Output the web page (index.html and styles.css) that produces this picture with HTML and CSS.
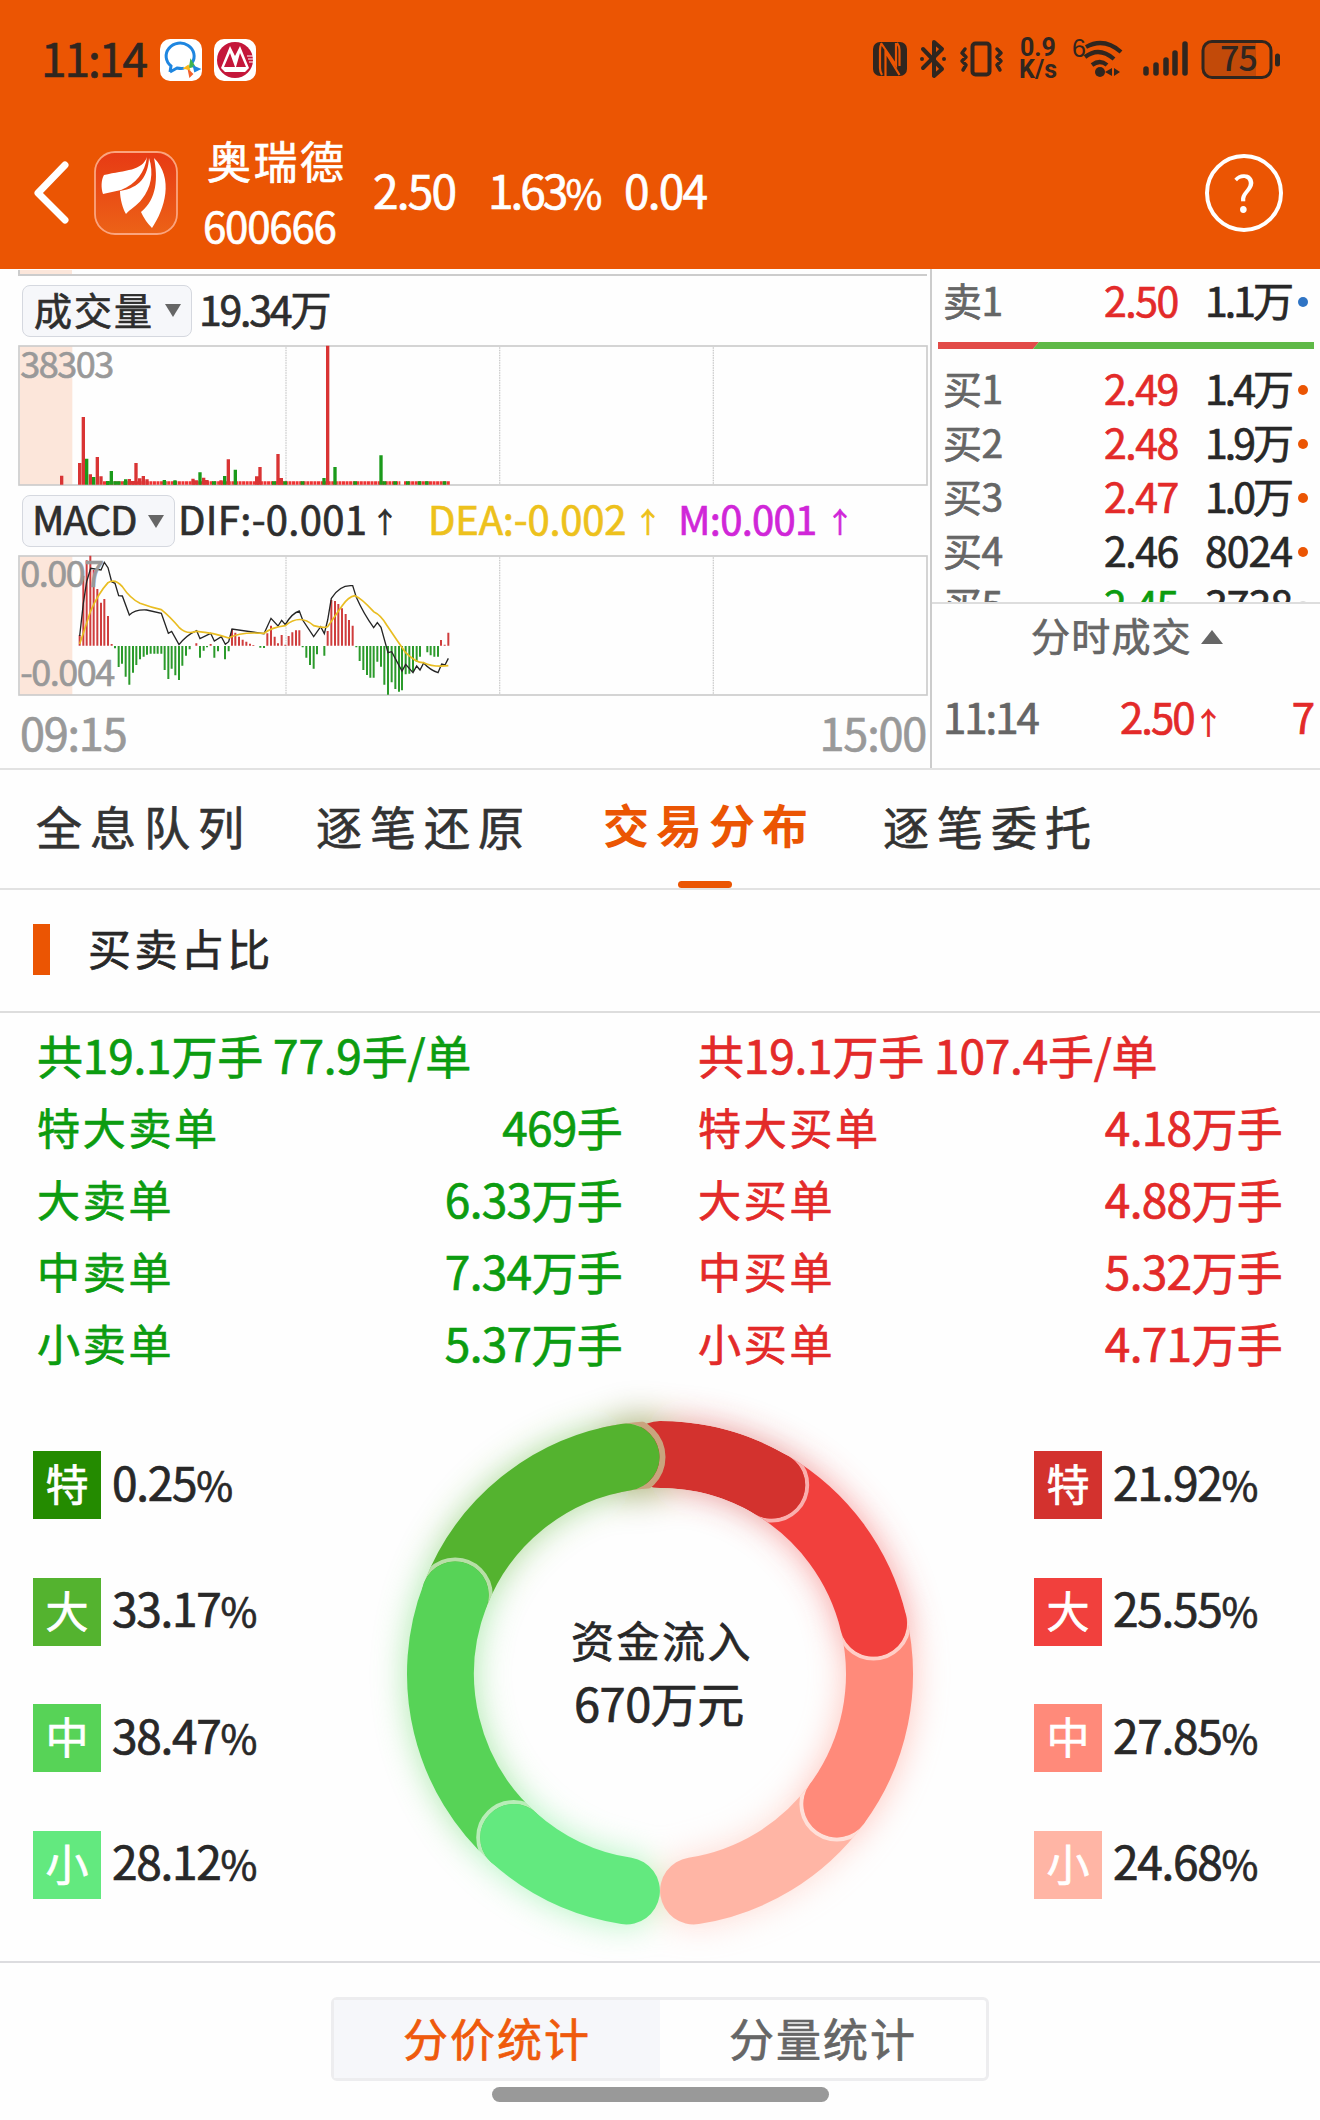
FILE: index.html
```html
<!DOCTYPE html>
<html lang="zh-CN">
<head>
<meta charset="utf-8">
<title>奥瑞德 600666</title>
<link rel="stylesheet" href="styles.css">
</head>
<body>
<header class="header">
  <div class="status">
    <span class="clock">11:14</span>
    <svg class="app-icon" viewBox="0 0 42 42"><rect width="42" height="42" rx="10" fill="#fff"/><path d="M10 33l1-6A14 13 0 1 1 32 24M10 33l7-4q5 1 7 0" fill="none" stroke="#1e86e0" stroke-width="3"/><path d="M31 22l3 5-4 1z" fill="#3fb34f" stroke="#3fb34f" stroke-width="2"/><path d="M34 28l5 2-4 2z" stroke="#1e86e0" stroke-width="2" fill="#1e86e0"/><path d="M29 32l3 3-2 2z" stroke="#f2602c" stroke-width="2" fill="#f2602c"/><path d="M25 29l3-2 1 3z" stroke="#fbb81b" stroke-width="2" fill="#fbb81b"/></svg>
    <svg class="app-icon" viewBox="0 0 42 42"><rect width="42" height="42" rx="10" fill="#fff"/><circle cx="21" cy="21" r="18" fill="#c4163a"/><path d="M7 29L16 7l5 10 5-10 9 22-4 4H11z" fill="#fff"/><path d="M10 28l6-14 5 14zM22 28l4-14 6 14z" fill="#c4163a"/><path d="M33 17h6M34 20h5M35 23h4" stroke="#fff" stroke-width="1"/></svg>
    <svg class="status-icons" viewBox="860 30 430 60" width="430" height="60" fill="none" stroke="#30261f" stroke-linecap="round">
      <rect x="873" y="42" width="34" height="34" rx="7" fill="#30261f" stroke="none"/>
      <path d="M881.500 44Q880 46 880 50V68Q880 72 882 75M897 43Q899.500 46 899.500 50V66" stroke="#eb5503" stroke-width="2.200" stroke-linecap="butt"/>
      <path d="M885.500 76V52l14 23M881 43l15 22V43" stroke="#eb5503" stroke-width="2.200" stroke-linecap="butt"/>
      <path d="M923 49l19 20-8 7V42l8 7-19 19M922 59v0M944 59v0" stroke-width="4" stroke-linejoin="round"/>
      <rect x="972.500" y="43.500" width="17" height="31" rx="3" stroke-width="4"/>
      <path d="M965 49l-3 4 4 4-4 4 4 4-3 5M997 49l4 4-4 4 4 4-4 4 3 5" stroke-width="3.500" stroke-linejoin="round"/>
      <text class="speed" x="1020" y="56">0.9</text><text class="speed" x="1019" y="78">K/s</text>
      <text class="wifi-gen" x="1072" y="57">6</text>
      <path d="M1086 47q18-10 35 5M1085 57q14-11 29 2M1092 65q8-6 15 0" stroke-width="4.200" stroke-linecap="butt"/>
      <circle cx="1100" cy="72" r="5" fill="#30261f" stroke="none"/>
      <path d="M1112 68v8l-7-4zM1114 68v8l6-4z" fill="#30261f" stroke="none"/>
      <path d="M1146 69v4M1156 65v8M1166 60v13M1175 53v20M1185 44v29" stroke-width="5.500"/>
      <path d="M1212 43h44v33h-44a8 8 0 0 1-8-8V51a8 8 0 0 1 8-8z" fill="#30261f" fill-opacity=".22" stroke="none"/>
      <rect x="1203" y="41.500" width="68" height="36" rx="9" stroke-width="3"/>
      <path d="M1277.500 56v8" stroke-width="5"/>
      <text class="battery" x="1220" y="71">75</text>
    </svg>
  </div>
  <div class="titlebar">
    <svg class="back" viewBox="0 0 38 64"><path d="M33 4L6 32l27 27" fill="none" stroke="#fff" stroke-width="7" stroke-linecap="round" stroke-linejoin="round"/></svg>
    <svg class="logo" viewBox="0 0 84 84"><defs><linearGradient id="lg" x1="0" y1="0" x2="0" y2="1"><stop offset="0" stop-color="#e73a14"/><stop offset="1" stop-color="#ec6217"/></linearGradient></defs><rect x="1" y="1" width="82" height="82" rx="20" fill="url(#lg)" stroke="#fba47e" stroke-width="1.800"/><path d="M53 6C48 20 32 19 10 24C7 29 7 37 9 43L27 39C42 33 51 21 53 6z" fill="#fff"/><path d="M55 7C54 25 46 37 26 40C26 48 29 58 32 63C36 58 43 55 48 48C57 37 60 22 55 7z" fill="#fff"/><path d="M60 7C64 27 63 48 47 61Q51 70 58 77C71 58 80 27 60 7z" fill="#fff"/></svg>
    <div class="stock"><div class="stock-name">奥瑞德</div><div class="stock-code">600666</div></div>
    <div class="quote"><span class="q1">2.50</span><span class="q2">1.63<small>%</small></span><span>0.04</span></div>
    <div class="help">?</div>
  </div>
</header>

<main>
<section class="market">
  <div class="charts">
    <svg class="price-tail" viewBox="0 0 930 7" width="930" height="7"><rect x="20" width="52" height="5" fill="#fce6da"/><path d="M19 0v5H927" fill="none" stroke="#ccc" stroke-width="2"/></svg>
    <div class="indicator vol"><span class="pill">成交量<i class="down"></i></span><span class="val vol-value">19.34万</span></div>
    <svg class="plot" viewBox="0 255 2790 426" width="930" height="142">
      <rect x="60" y="258" width="157" height="417" fill="#fce6da"/>
      <path d="M858 262V672M1499 262V672M2140 262V672" stroke="#ccc" stroke-width="4" stroke-dasharray="4 3.500"/>
      <rect x="57" y="258" width="2724" height="417" fill="none" stroke="#ccc" stroke-width="5"/>
      <text class="scale" x="61" y="353">38303</text>
      <path d="M309 669H1201M1212 669H1350" stroke="#e33" stroke-width="10" stroke-dasharray="9 1.700"/>
      <path d="M318 669h11M340 669h22M370 669h12M489 669h10M520 669h10M636 669h12M816 669h12M850 669h11M902 669h11M1060 669h11M1148 669h11M1180 669h11M1218 669h11M1253 669h11M1275 669h11M1328 669h11" stroke="#1a9a1a" stroke-width="10"/>
      <path d="M185 674V647M239 674V609M250 674V471M271 674V643M292 674V591M303 674V649M388 674V657M398 674V663M408 674V609M419 674V655M430 674V648M441 674V658M579 674V656M589 674V661M611 674V653M621 674V660M663 674V661M685 674V598M770 674V649M780 674V621M834 674V582M844 674V654M983 674V257" stroke="#d93434" stroke-width="10"/>
      <path d="M260 674V596M281 674V651M323 674V663M334 674V633M377 674V658M493 674V660M525 674V661M600 674V637M674 674V648M706 674V629M972 674V654M1005 674V621M1143 674V586" stroke="#1a9a1a" stroke-width="10"/>
    </svg>
    <div class="indicator macd"><span class="pill">MACD<i class="down"></i></span><span class="val dif">DIF:-0.001</span><span class="arr a1">↑</span><span class="val dea">DEA:-0.002</span><span class="arr a2">↑</span><span class="val m">M:0.001</span><span class="arr a3">↑</span></div>
    <svg class="plot" viewBox="0 195 2790 426" width="930" height="142">
      <rect x="60" y="198" width="157" height="417" fill="#fce6da"/>
      <path d="M858 202V612M1499 202V612M2140 202V612" stroke="#ccc" stroke-width="4" stroke-dasharray="4 3.500"/>
      <rect x="57" y="198" width="2724" height="417" fill="none" stroke="#ccc" stroke-width="5"/>
      <path d="M239 467V435M250 467V257M260 467V211M271 467V197M281 467V240M292 467V297M303 467V338M313 467V327M324 467V378M335 467V462M589 467V460M632 467V462M696 467V418M706 467V428M717 467V440M728 467V449M739 467V455M750 467V461M760 467V465M802 467V430M813 467V407M824 467V440M834 467V460M845 467V435M856 467V464M866 467V438M877 467V427M888 467V421M898 467V421M983 467V423M994 467V330M1005 467V333M1015 467V342M1026 467V355M1037 467V372M1047 467V390M1058 467V407M1323 467V450M1334 467V464M1345 467V428" stroke="#cf3d3d" stroke-width="6"/>
      <path d="M345 468V475M356 468V531M366 468V521M377 468V560M388 468V584M399 468V548M409 468V525M420 468V508M431 468V500M441 468V494M452 468V491M463 468V491M473 468V491M484 468V491M494 468V540M505 468V567M515 468V536M526 468V556M537 468V570M547 468V527M558 468V497M569 468V478M600 468V503M611 468V482M621 468V472M643 468V503M654 468V484M675 468V508M686 468V484M781 468V473M792 468V474M908 468V472M919 468V503M930 468V525M941 468V536M951 468V493M973 468V497M1069 468V472M1079 468V513M1090 468V540M1101 468V555M1111 468V563M1121 468V563M1132 468V515M1143 468V530M1153 468V584M1164 468V614M1175 468V577M1186 468V597M1197 468V605M1206 468V601M1217 468V553M1228 468V551M1239 468V545M1250 468V515M1260 468V500M1282 468V487M1292 468V496M1303 468V500M1314 468V500" stroke="#2b9a2b" stroke-width="6"/>
      <path d="M239 438L250 340L260 275L272 235L303 240L313 217L324 233L335 275L345 280L356 317L367 318L388 375Q405 358 440 360L484 370L505 430L515 424L537 464Q560 435 590 422L600 446L632 430L643 453L664 440L676 463L686 455L696 417L792 431L813 385L834 408L845 391L856 404Q875 370 898 363L908 390L941 440L962 410L973 431L983 390L994 325Q1020 283 1058 287L1069 322Q1090 370 1121 413L1132 398L1143 412L1164 488L1175 485L1206 543L1217 523L1239 548L1250 528L1260 540L1271 519Q1290 540 1314 548L1325 522L1335 525L1345 505" fill="none" stroke="#252525" stroke-width="4"/>
      <path d="M239 462Q260 400 271 365Q295 310 324 278Q345 265 367 290Q390 325 420 340Q455 353 484 359Q510 380 537 412Q560 435 590 424Q640 428 686 444Q720 425 792 430Q815 412 856 407Q900 370 941 407Q970 415 983 410L1026 348Q1045 320 1065 317Q1085 325 1121 365Q1143 375 1160 405Q1190 450 1217 488Q1250 520 1271 518Q1300 532 1345 527" fill="none" stroke="#e9bd22" stroke-width="5"/>
      <text class="scale" x="61" y="291">0.007</text>
      <text class="scale" x="61" y="589">-0.004</text>
    </svg>
    <div class="axis"><span>09:15</span><span>15:00</span></div>
  </div>
  <div class="book">
    <div class="orders">
      <div class="order ask"><span>卖1</span><b class="red">2.50</b><b class="qty">1.1万</b><i class="dot blue"></i></div>
      <svg class="ratio" viewBox="0 0 376 7" width="376" height="7"><path d="M0 0H101L95 7H0z" fill="#e24b48"/><path d="M101 0H376V7H95z" fill="#5fb947"/></svg>
      <div class="order"><span>买1</span><b class="red">2.49</b><b class="qty">1.4万</b><i class="dot"></i></div>
      <div class="order"><span>买2</span><b class="red">2.48</b><b class="qty">1.9万</b><i class="dot"></i></div>
      <div class="order"><span>买3</span><b class="red">2.47</b><b class="qty">1.0万</b><i class="dot"></i></div>
      <div class="order"><span>买4</span><b>2.46</b><b class="qty whole">8024</b><i class="dot"></i></div>
      <div class="order"><span>买5</span><b class="green">2.45</b><b class="qty whole">3738</b><i class="dot pale"></i></div>
    </div>
    <div class="ticks-head"><span>分时成交</span><i class="up"></i></div>
    <div class="tick"><span>11:14</span><b>2.50<em>↑</em></b><b class="count">7</b></div>
  </div>
</section>

<nav class="tabs"><span>全息队列</span><span>逐笔还原</span><span class="active">交易分布</span><span>逐笔委托</span></nav>
<h2 class="section-title">买卖占比</h2>

<section class="totals">
  <div class="side green">
    <div class="row sum">共19.1万手 77.9手/单</div>
    <div class="row"><span>特大卖单</span><b>469手</b></div>
    <div class="row"><span>大卖单</span><b>6.33万手</b></div>
    <div class="row"><span>中卖单</span><b>7.34万手</b></div>
    <div class="row"><span>小卖单</span><b>5.37万手</b></div>
  </div>
  <div class="side red">
    <div class="row sum">共19.1万手 107.4手/单</div>
    <div class="row"><span>特大买单</span><b>4.18万手</b></div>
    <div class="row"><span>大买单</span><b>4.88万手</b></div>
    <div class="row"><span>中买单</span><b>5.32万手</b></div>
    <div class="row"><span>小买单</span><b>4.71万手</b></div>
  </div>
</section>

<section class="share">
  <ul class="legend">
    <li><i class="g1">特</i><span>0.25<small>%</small></span></li>
    <li><i class="g2">大</i><span>33.17<small>%</small></span></li>
    <li><i class="g3">中</i><span>38.47<small>%</small></span></li>
    <li><i class="g4">小</i><span>28.12<small>%</small></span></li>
  </ul>
  <svg class="donut" viewBox="-330 -300 660 588" width="660" height="588">
    <defs>
      <filter id="glow" x="-30%" y="-30%" width="160%" height="160%"><feGaussianBlur stdDeviation="17"/></filter>
      <clipPath id="ring"><path clip-rule="evenodd" d="M-253 0a253 253 0 1 0 506 0a253 253 0 1 0-506 0zM-186 0a186 186 0 1 0 372 0a186 186 0 1 0-372 0z"/></clipPath>
      <path id="r1" d="M0-219.500A219.500 219.500 0 0 1 111.700-188.900"/>
      <path id="r2" d="M111.700-188.900A219.500 219.500 0 0 1 213.500-50.900"/>
      <path id="r3" d="M213.500-50.900A219.500 219.500 0 0 1 176.900 129.900"/>
      <path id="r4" d="M176.900 129.900A219.500 219.500 0 0 1 33.600 216.900"/>
      <path id="g4" d="M-33.600 216.900A219.500 219.500 0 0 1-146.300 163.600"/>
      <path id="g3" d="M-146.300 163.600A219.500 219.500 0 0 1-204.800-79"/>
      <path id="g2" d="M-204.800-79A219.500 219.500 0 0 1-34-216.900"/>
    </defs>
    <g class="glow" filter="url(#glow)"><use href="#r4" stroke="#ffb5a5"/><use href="#r3" stroke="#ff8a7a"/><use href="#r2" stroke="#f1403d"/><use href="#r1" stroke="#d3322e"/><use href="#g2" stroke="#54b32f"/><use href="#g3" stroke="#57d357"/><use href="#g4" stroke="#63e97f"/><circle cx="-22" cy="-217" r="24" stroke="#5a6a00" class="spot"/></g>
    <g class="arcs">
      <use href="#r4" stroke="#ffb5a5"/>
      <g clip-path="url(#ring)"><circle class="rim" cx="176.900" cy="129.900" r="35.500"/></g><use href="#r3" stroke="#ff8a7a"/>
      <g clip-path="url(#ring)"><circle class="rim" cx="213.500" cy="-50.900" r="35.500"/></g><use href="#r2" stroke="#f1403d"/>
      <g clip-path="url(#ring)"><circle class="rim" cx="111.700" cy="-188.900" r="35.500"/></g><g clip-path="url(#ring)"><use href="#r1" stroke="#d3322e"/></g>
      <g clip-path="url(#ring)"><circle class="rim olive" cx="-34" cy="-216.900" r="36.500"/></g><use href="#g2" stroke="#54b32f"/>
      <g clip-path="url(#ring)"><circle class="rim" cx="-204.800" cy="-79" r="35.500"/></g><use href="#g3" stroke="#57d357"/>
      <g clip-path="url(#ring)"><circle class="rim" cx="-146.300" cy="163.600" r="35.500"/></g><use href="#g4" stroke="#63e97f"/>
    </g>
    <text class="flow-label" x="-89" y="-16">资金流入</text>
    <text class="flow-value" x="-86" y="48">670万元</text>
  </svg>
  <ul class="legend">
    <li><i class="r1">特</i><span>21.92<small>%</small></span></li>
    <li><i class="r2">大</i><span>25.55<small>%</small></span></li>
    <li><i class="r3">中</i><span>27.85<small>%</small></span></li>
    <li><i class="r4">小</i><span>24.68<small>%</small></span></li>
  </ul>
</section>

<footer class="footer">
  <div class="toggle"><span class="on">分价统计</span><span>分量统计</span></div>
  <div class="home"></div>
</footer>
</main>
</body>
</html>
```
FILE: styles.css
```css
* { box-sizing: border-box; }
body { margin: 0; width: 1320px; height: 2120px; overflow: hidden; background: #fefefe; color: #282828; font-family: "Noto Sans CJK SC", "Noto Sans", sans-serif; font-size: 46px; -webkit-text-stroke: .7px currentColor; }
b, i, em { font-weight: 400; font-style: normal; }
small { font-size: 40px; }
svg { display: block; flex: none; -webkit-text-stroke: 0; }
.red { color: #e32a29; }
.green { color: #0c9c10; }

.header { height: 269px; background: #eb5503; }
.status { height: 119px; display: flex; align-items: center; padding-left: 41px; }
.clock { width: 119px; font-size: 46px; letter-spacing: -2px; color: #30261f; line-height: 60px; padding-bottom: 6px; }
.app-icon { width: 42px; height: 42px; margin-right: 12px; }
.status-icons { margin-left: 592px; }
.status-icons text { fill: #30261f; stroke: none; }
.speed { font: 700 25px Roboto, sans-serif; }
.wifi-gen { font: 500 25px "Liberation Sans", sans-serif; }
.battery { font: 500 34px "Noto Sans CJK SC", sans-serif; letter-spacing: -1px; }

.titlebar { height: 150px; display: flex; align-items: center; padding: 0 37px 2px 32px; color: #fff; }
.back { width: 38px; height: 64px; }
.logo { width: 84px; height: 84px; margin-left: 24px; }
.stock { margin-left: 25px; width: 170px; height: 126px; margin-bottom: 5px; }
.stock-name { padding-left: 4px; font-size: 44px; letter-spacing: 2.5px; line-height: 64px; }
.stock-code { font-size: 42px; letter-spacing: -1.2px; line-height: 62px; margin-top: 2px; }
.quote { display: flex; letter-spacing: -1.8px; line-height: 60px; padding-bottom: 6px; }
.q1 { width: 115px; }
.q2 { width: 136px; letter-spacing: -3px; }
.help { margin-left: auto; width: 78px; height: 78px; border: 4px solid #fff; border-radius: 50%; text-align: center; font-size: 50px; line-height: 64px; -webkit-text-stroke: 0; }

.market { height: 501px; display: flex; border-bottom: 2px solid #e2e2e2; }
.charts { width: 932px; border-right: 2px solid #ccc; padding-top: 1px; overflow: hidden; flex: none; }
.indicator { height: 68px; display: flex; align-items: center; font-size: 40px; color: #2e2e2e; padding-left: 22px; white-space: nowrap; }
.vol { padding-bottom: 1px; }
.val { line-height: 56px; padding-bottom: 6px; }
.pill { display: flex; align-items: center; justify-content: space-between; width: 170px; height: 52px; padding: 0 10px 0 11px; background: #f6f7fa; border: 1px solid #d5d8df; border-radius: 8px; font-size: 38px; letter-spacing: 2px; line-height: 45px; padding-bottom: 5px; }
.macd .pill { width: 153px; font-size: 40px; letter-spacing: -1.3px; padding-left: 9px; }
.down { border: 8px solid transparent; border-top: 13px solid #666; border-bottom: 0; margin-top: 5px; }
.vol-value { margin-left: 7px; font-size: 41px; letter-spacing: -2.2px; }
.dif { margin-left: 3px; width: 193px; letter-spacing: .3px; }
.dea { width: 206px; letter-spacing: -.2px; color: #edc11c; }
.m { width: 148px; letter-spacing: -.7px; color: #d026d8; }
.arr { font-size: 28px; line-height: 40px; }
.a1 { width: 57px; }
.a2 { width: 44px; color: #edc11c; }
.a3 { color: #d026d8; }
.scale { font-size: 108px; letter-spacing: -4.5px; fill: #999; stroke: #999; stroke-width: 2px; }
.axis { display: flex; justify-content: space-between; padding: 0 4px 0 20px; font-size: 45px; letter-spacing: -1.2px; line-height: 70px; color: #999; }

.book { flex: 1; padding-top: 1px; }
.orders { height: 334px; padding-left: 11px; overflow: hidden; border-bottom: 2px solid #ddd; }
.order { height: 54px; display: flex; align-items: center; font-size: 41px; line-height: 48px; letter-spacing: -1.5px; white-space: nowrap; }
.order span { width: 161px; color: #666; font-size: 39px; letter-spacing: -.5px; padding-bottom: 6px; }
.order b { width: 101px; padding-bottom: 6px; }
.order .qty { width: 88px; letter-spacing: -3px; padding-left: 0; }
.order .whole { letter-spacing: -1px; }
.dot { width: 10px; height: 10px; border-radius: 50%; background: #eb5503; margin-left: 5px; flex: none; }
.blue { background: #2f74c4; }
.pale { background: #ddd; }
.ask { margin-top: 5px; }
.ratio { margin: 13px 0 14px -5px; }
.ticks-head { display: flex; align-items: center; padding-left: 99px; height: 66px; font-size: 39px; letter-spacing: 1.200px; line-height: 54px; color: #666; }
.ticks-head span { padding-bottom: 6px; }
.up { border: 11px solid transparent; border-bottom: 14px solid #666; border-top: 0; margin-left: 9px; }
.tick { display: flex; padding: 0 7px 0 11px; font-size: 42px; letter-spacing: -2px; margin-top: 13px; color: #666; line-height: 66px; }
.tick span { width: 177px; }
.tick b { color: #e32a29; }
.tick em { font-size: 30px; line-height: 40px; }
.tick .count { margin-left: auto; }

.tabs { height: 120px; display: flex; border-bottom: 2px solid #e2e2e2; padding-left: 36px; font-size: 46px; letter-spacing: 8px; line-height: 111px; color: #333; }
.tabs span { width: 280px; }
.tabs span:nth-child(2) { width: 287px; }
.tabs .active { color: #eb5503; font-weight: 700; position: relative; line-height: 107px; letter-spacing: 7px; -webkit-text-stroke: 0; }
.tabs .active::after { content: ""; position: absolute; left: 75px; bottom: 0; width: 54px; height: 7px; border-radius: 4px; background: #eb5503; }
.section-title { margin: 0; height: 123px; display: flex; align-items: center; padding: 0 0 7px 33px; border-bottom: 2px solid #ddd; font-size: 43px; font-weight: 400; letter-spacing: 3.4px; }
.section-title::before { content: ""; width: 17px; height: 51px; margin: 4px 38px 0 0; background: #eb5503; }

.totals { display: flex; padding: 5px 38px 0 37px; justify-content: space-between; }
.side { width: 585px; }
.side.red { width: 584px; }
.row { height: 72px; line-height: 72px; display: flex; justify-content: space-between; white-space: pre; }
.row span { font-size: 43px; letter-spacing: 2.700px; }
.row b { letter-spacing: -.7px; }
.sum { letter-spacing: -.2px; }

.share { display: flex; height: 586px; padding-left: 33px; margin-top: -3px; }
.legend { list-style: none; margin: 0; padding: 76px 0 0; width: 297px; flex: none; }
.donut + .legend { width: 286px; }
.legend li { display: flex; align-items: center; height: 68px; margin-bottom: 58.600px; letter-spacing: -1.3px; }
.legend i { width: 68px; height: 68px; margin-right: 11px; color: #fff; text-align: center; line-height: 63px; font-size: 43px; letter-spacing: 0; }
.legend span { line-height: 62px; padding-bottom: 6px; }
.g1 { background: #248b00; } .g2 { background: #54b32f; } .g3 { background: #57d357; } .g4 { background: #63e97f; }
.r1 { background: #d3322e; } .r2 { background: #f1403d; } .r3 { background: #ff8a7a; } .r4 { background: #ffb5a5; }
.donut { margin-right: 44px; margin-top: -1px; }
.arcs, .glow { fill: none; stroke-width: 67px; stroke-linecap: round; }
.glow { opacity: .5; }
.spot { stroke-width: 34px; }
.rim { stroke: rgba(255, 255, 255, .58); stroke-width: 4px; }
.olive { stroke: #c9a47e; stroke-width: 6px; }
.flow-label { font-size: 43px; letter-spacing: 2.5px; fill: #282828; stroke: #282828; stroke-width: .7px; }
.flow-value { font-size: 47px; letter-spacing: -.5px; fill: #282828; stroke: #282828; stroke-width: .7px; }

.footer { border-top: 2px solid #dcdcdf; padding-top: 34px; }
.toggle { width: 658px; height: 84px; margin: 0 auto; display: flex; border: 3px solid #ededef; border-radius: 6px; }
.toggle span { flex: 1; text-align: center; line-height: 75px; font-size: 45px; letter-spacing: 2px; color: #666; }
.toggle .on { background: #f6f7fa; color: #ef5a0c; }
.home { width: 337px; height: 15px; border-radius: 8px; margin: 6px auto 0; background: #999; }
```
